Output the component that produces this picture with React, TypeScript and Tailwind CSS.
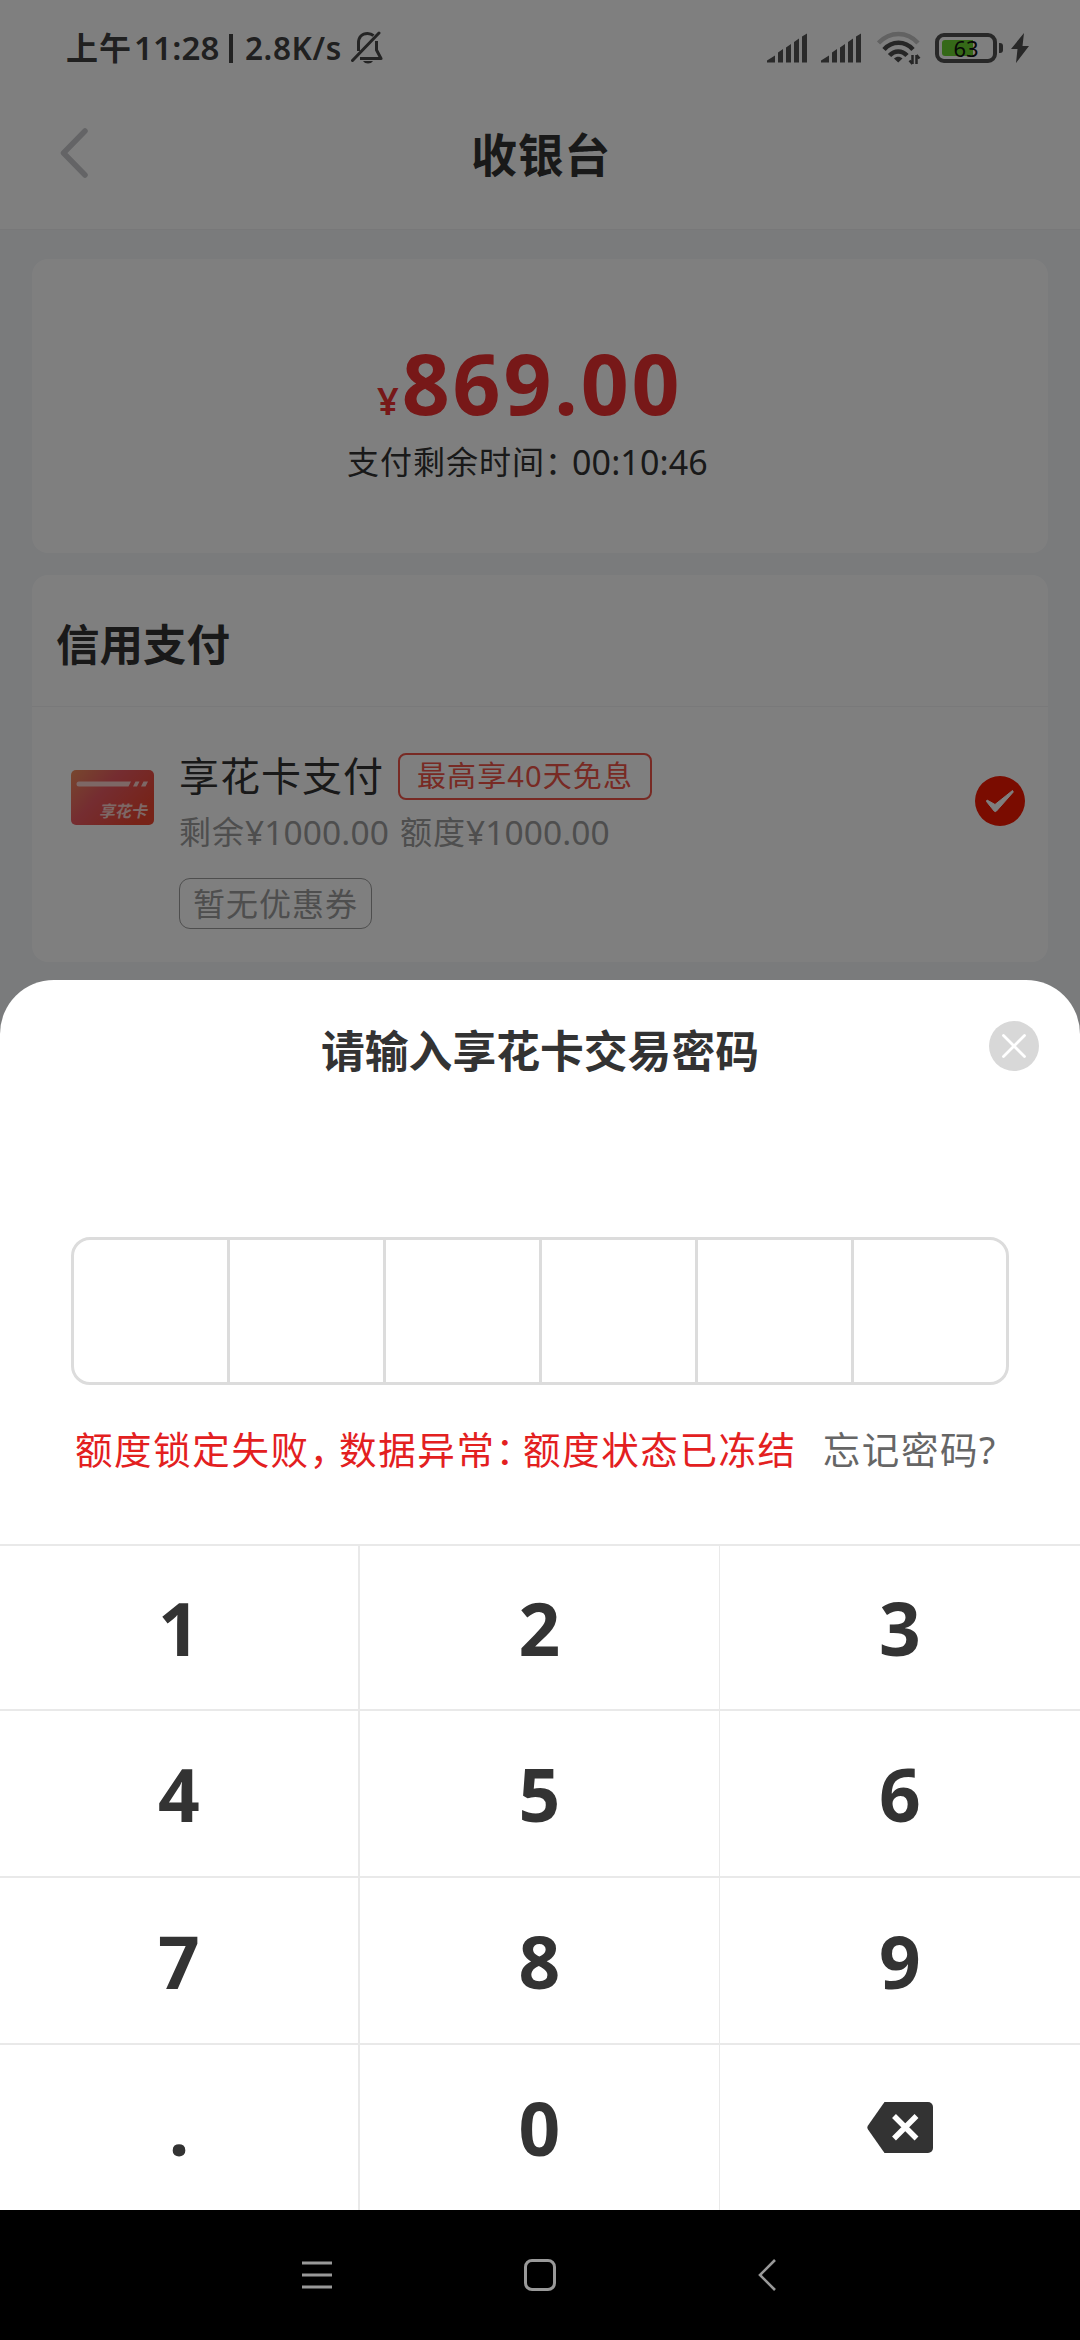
import React from "react";

const KEYS = ["1", "2", "3", "4", "5", "6", "7", "8", "9", ".", "0", "del"];

function SignalIcon() {
  return (
    <svg width="40" height="30" viewBox="0 0 40 30" fill="#555">
      <path d="M0 29.500v-2l8-5v7zM11 29.500V19.500l5-3.500v13.500zM19 29.500V14.500l5-3.500v18.500zM27 29.500V9l5-3.500v24zM35 29.500V3.500L40 .5v29z" />
    </svg>
  );
}

function BellOffIcon() {
  return (
    <svg width="32" height="34" viewBox="0 0 32 34" fill="none" stroke="#484848" strokeWidth="3">
      <path d="M1.500 29.500L28 2" strokeLinecap="round" />
      <path d="M7.500 20v-8C7.500 6 11 2.500 16.500 2.500c2.500 0 4.500.8 6 2.200" />
      <path d="M25.500 10v9l4.500 8.500H9" strokeLinejoin="round" />
      <path d="M12 30h10c-1 1.700-3 2.500-5 2.500s-4-.8-5-2.500z" fill="#484848" stroke="none" />
    </svg>
  );
}

function WifiIcon() {
  return (
    <svg width="44" height="34" viewBox="0 0 44 34" fill="none" strokeWidth="4.500">
      <path d="M1.500 12C13 0 30 0 41 12" stroke="#c4c4c4" />
      <path d="M7 18.500c8-9 21-9 29 0" stroke="#4c4c4c" />
      <path d="M12.500 24.500c5-5.500 12.500-5.500 17.500 0" stroke="#4c4c4c" />
      <path d="M17 27.500c2.500-2.300 6-2.300 8.500 0l-4.300 4z" fill="#4c4c4c" />
      <path d="M35.500 24v9M39.500 33v-9M35.500 33l-3-3.500M39.500 24l3 3.500" stroke="#4c4c4c" strokeWidth="2.500" />
    </svg>
  );
}

function StatusBar() {
  return (
    <div className="flex h-[96px] items-center pl-[66px] pr-[51px] font-bold text-[#404040]">
      <span className="w-[68px] text-[32px] tracking-[1px]">上午</span>
      <span className="w-[84px] text-[33px] font-semibold tracking-[0.2px]">11:28</span>
      <span className="ml-[11px] h-[29px] w-[4px] bg-[#444]" />
      <span className="ml-[12px] w-[99px] text-[31.500px] font-semibold tracking-[0.6px]">2.8K/s</span>
      <span className="ml-[7px]">
        <BellOffIcon />
      </span>
      <div className="ml-auto flex items-center">
        <SignalIcon />
        <span className="ml-[14px]">
          <SignalIcon />
        </span>
        <span className="ml-[16px]">
          <WifiIcon />
        </span>
        <div className="relative ml-[14px] flex h-[30px] w-[62px] items-center rounded-[9px] border-[4px] border-[#505050] pl-[3px]">
          <div className="h-[16px] w-[31px] rounded-l-[3px] bg-[#6bd330]" />
          <span className="absolute inset-0 flex items-center justify-center text-[22px] font-normal leading-none text-[#111]">
            63
          </span>
        </div>
        <span className="ml-[2px] h-[10px] w-[4px] rounded-r-[3px] bg-[#505050]" />
        <svg className="ml-[8px]" width="18" height="30" viewBox="0 0 18 30" fill="#505050">
          <path d="M13 0L0 16h6.500L5 30 18 13h-6.500z" />
        </svg>
      </div>
    </div>
  );
}

function Header() {
  return (
    <div className="flex h-[134px] items-center border-b border-[#f0f1f3] pl-[60px] pr-[60px] pb-[19px]">
      <svg width="28" height="50" viewBox="0 0 28 50" fill="none" stroke="#c8c9cc" strokeWidth="5.500" strokeLinecap="round" strokeLinejoin="round">
        <path d="M25 3L3.500 25 25 47" />
      </svg>
      <h1 className="flex-1 pr-[26px] pt-[2px] text-center text-[46px] font-bold tracking-[0.6px] text-[#333]">收银台</h1>
    </div>
  );
}

function AmountCard() {
  return (
    <section className="mx-[32px] mt-[29px] h-[294px] rounded-[16px] bg-white pt-[71px]">
      <div className="flex h-[105px] items-baseline pl-[345px] text-[#ee3030]">
        <span className="text-[38px] font-semibold">¥</span>
        <span className="ml-[3px] text-[84px] font-bold leading-[105px] tracking-[2.800px]">869.00</span>
      </div>
      <div className="mt-[2px] flex h-[50px] items-center pl-[315px] text-[32px] tracking-[1px] text-[#333]">
        <span>
          支付剩余时间<span className="tracking-[-5px]">：</span>
        </span>
        <span className="text-[34px] tracking-[0.1px]">00:10:46</span>
      </div>
    </section>
  );
}

function CardIcon() {
  return (
    <svg className="mt-[63px] shrink-0" width="83" height="55" viewBox="0 0 83 55">
      <defs>
        <linearGradient id="card" x1="0" y1="0" x2="1" y2="0.6">
          <stop offset="0" stopColor="#f08e5c" />
          <stop offset="0.45" stopColor="#ea5a62" />
          <stop offset="1" stopColor="#ee4630" />
        </linearGradient>
      </defs>
      <rect width="83" height="55" rx="5" fill="url(#card)" />
      <path d="M8 11.500h52l-2.500 5H8a2.500 2.500 0 010-5zM64.500 11.500h4l-2.500 5h-4zM72.500 11.500h4.500l-2.500 5h-4.500z" fill="#fbd0cc" />
      <text x="28" y="47" fontSize="16" fontWeight="700" fill="#fbd0cc" transform="translate(10 0) skewX(-12)">
        享花卡
      </text>
    </svg>
  );
}

function CreditCard() {
  return (
    <section className="mx-[32px] mt-[22px] h-[387px] rounded-[16px] bg-white">
      <h2 className="flex h-[132px] items-center border-b border-[#f2f2f4] pt-[8px] pl-[24px] text-[43.500px] font-bold text-[#333]">
        信用支付
      </h2>
      <div className="flex pl-[39px]">
        <CardIcon />
        <div className="pl-[25px] pt-[39px]">
          <div className="flex h-[60px] items-center">
            <span className="text-[40px] tracking-[1px] text-[#333]">享花卡支付</span>
            <span className="ml-[14px] flex h-[47px] w-[254px] items-center justify-center rounded-[8px] border-2 border-[#f05548] text-[29px] tracking-[1.100px] text-[#f05548]">
              最高享40天免息
            </span>
          </div>
          <div className="flex h-[50px] items-center pt-[2px] text-[32px] tracking-[1px] text-[#9c9c9c]">
            <span>剩余</span>
            <span className="text-[33.500px] tracking-[0.1px]">¥1000.00</span>
            <span className="ml-[11px]">额度</span>
            <span className="text-[33.500px] tracking-[0.1px]">¥1000.00</span>
          </div>
          <div className="mt-[22px] flex h-[51px] w-[193px] items-center justify-center rounded-[11px] border border-[#9c9c9c] text-[32px] tracking-[1px] text-[#9c9c9c]">
            暂无优惠券
          </div>
        </div>
        <svg className="ml-auto mr-[23px] mt-[69px]" width="50" height="50" viewBox="0 0 50 50">
          <circle cx="25" cy="25" r="25" fill="#f51800" />
          <path d="M12 24l8 4.500L37.500 14.500l.8 1.500L21.500 35q-1.200 1.300-2.400 0L11.500 25.500z" fill="#fff" stroke="#fff" strokeLinejoin="round" />
        </svg>
      </div>
    </section>
  );
}

function BackspaceIcon() {
  return (
    <svg width="66" height="51" viewBox="0 0 66 51">
      <path d="M17.500 0H61a5 5 0 015 5v41a5 5 0 01-5 5H17.500L1 27.500q-1.300-2 0-4z" fill="#333" />
      <path d="M27 14l22.500 22.500M49.500 14L27 36.500" stroke="#fff" strokeWidth="5.500" />
    </svg>
  );
}

function Keypad() {
  return (
    <div className="grid grid-cols-[360px_360px_360px] grid-rows-[165px_167px_167px_167px]">
      {KEYS.map((key, i) => (
        <button
          key={key}
          className={`flex items-center justify-center border-t-2 border-[#e9e9e9] text-[73px] font-bold leading-none text-[#333] ${
            i % 3 === 0 ? "border-r-2" : i % 3 === 1 ? "border-r" : ""
          }`}
        >
          {key === "del" ? <BackspaceIcon /> : key}
        </button>
      ))}
    </div>
  );
}

function PasswordSheet() {
  return (
    <div className="absolute left-0 top-[980px] flex h-[1230px] w-full flex-col rounded-t-[54px] bg-white">
      <div className="relative flex h-[142px] items-center justify-center">
        <h3 className="pt-[2px] text-[43.800px] font-bold text-[#333]">请输入享花卡交易密码</h3>
        <button className="absolute right-[41px] top-[41px]">
          <svg width="50" height="50" viewBox="0 0 50 50">
            <circle cx="25" cy="25" r="25" fill="#d8d8d8" />
            <path d="M14.500 14.500l21 21M35.500 14.500l-21 21" stroke="#fff" strokeWidth="2.800" strokeLinecap="round" />
          </svg>
        </button>
      </div>
      <div className="mx-[71px] mt-[115px] grid h-[148px] grid-cols-[156px_156px_156px_156px_156px_1fr] rounded-[19px] border-[3px] border-[#dcdcdc]">
        {[0, 1, 2, 3, 4, 5].map((i) => (
          <div key={i} className={i < 5 ? "border-r-[3px] border-[#dcdcdc]" : ""} />
        ))}
      </div>
      <div className="mt-[35px] flex h-[60px] items-center pl-[75px] text-[37.500px] tracking-[1.600px]">
        <span className="text-[#e3201f]">
          额度锁定失败<span className="tracking-[-8px]">，</span>数据异常<span className="tracking-[-10px]">：</span>
          额度状态已冻结
        </span>
        <span className="ml-[26px] text-[#666]">忘记密码?</span>
      </div>
      <div className="mt-auto">
        <Keypad />
      </div>
    </div>
  );
}

function NavBar() {
  return (
    <div className="absolute left-0 top-[2210px] flex h-[130px] w-full items-center bg-black pl-[302px]">
      <svg width="30" height="32" viewBox="0 0 30 32" stroke="#999" strokeWidth="2.800">
        <path d="M0 4h30M0 16h30M0 28h30" />
      </svg>
      <svg className="ml-[192px]" width="32" height="32" viewBox="0 0 32 32" fill="none" stroke="#999" strokeWidth="3">
        <rect x="1.500" y="1.500" width="29" height="29" rx="6.500" />
      </svg>
      <svg className="ml-[202px]" width="18" height="32" viewBox="0 0 18 32" fill="none" stroke="#999" strokeWidth="2.600">
        <path d="M17 1L2 16l15 15" />
      </svg>
    </div>
  );
}

export default function App() {
  return (
    <div className="relative h-[2340px] w-[1080px] overflow-hidden whitespace-nowrap bg-[#f4f6f9] font-['Noto_Sans','Noto_Sans_CJK_SC',sans-serif]">
      <div className="bg-white">
        <StatusBar />
        <Header />
      </div>
      <AmountCard />
      <CreditCard />
      {/* dimmed backdrop */}
      <div className="absolute inset-0 bg-black/50" />
      <PasswordSheet />
      <NavBar />
    </div>
  );
}
